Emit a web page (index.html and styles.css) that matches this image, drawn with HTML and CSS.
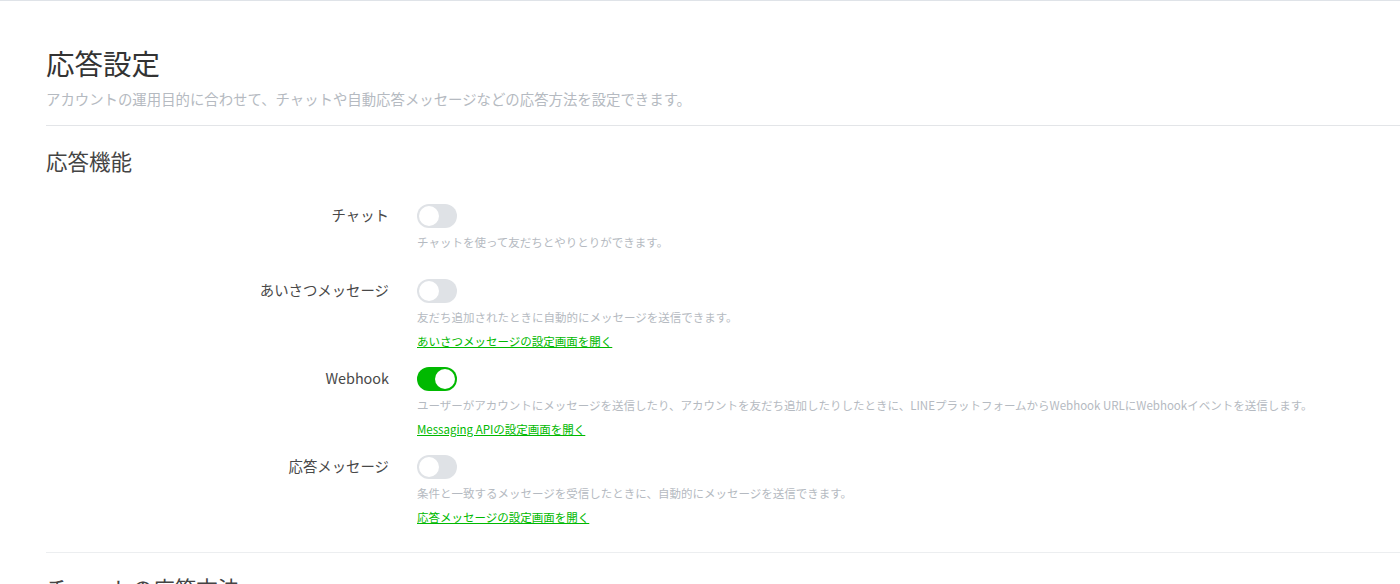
FILE: index.html
```html
<!DOCTYPE html>
<html lang="ja">
<head>
    <meta charset="UTF-8">
    <title>応答設定</title>
    <link rel="stylesheet" href="styles.css">
</head>
<body>
<div class="settings-page">
    <div class="page-header">
        <h1 class="page-title">応答設定</h1>
        <p class="page-lead">アカウントの運用目的に合わせて、チャットや自動応答メッセージなどの応答方法を設定できます。</p>
    </div>

    <div class="settings-section">
        <h2 class="section-title">応答機能</h2>

        <div class="setting-row">
            <div class="setting-label">チャット</div>
            <div class="setting-control">
                <span class="toggle"><span class="toggle-knob"></span></span>
                <p class="setting-desc">チャットを使って友だちとやりとりができます。</p>
            </div>
        </div>

        <div class="setting-row">
            <div class="setting-label">あいさつメッセージ</div>
            <div class="setting-control">
                <span class="toggle"><span class="toggle-knob"></span></span>
                <p class="setting-desc">友だち追加されたときに自動的にメッセージを送信できます。</p>
                <a href="#" class="setting-link">あいさつメッセージの設定画面を開く</a>
            </div>
        </div>

        <div class="setting-row">
            <div class="setting-label">Webhook</div>
            <div class="setting-control">
                <span class="toggle toggle-on"><span class="toggle-knob"></span></span>
                <p class="setting-desc">ユーザーがアカウントにメッセージを送信したり、アカウントを友だち追加したりしたときに、LINEプラットフォームからWebhook URLにWebhookイベントを送信します。</p>
                <a href="#" class="setting-link">Messaging APIの設定画面を開く</a>
            </div>
        </div>

        <div class="setting-row">
            <div class="setting-label">応答メッセージ</div>
            <div class="setting-control">
                <span class="toggle"><span class="toggle-knob"></span></span>
                <p class="setting-desc">条件と一致するメッセージを受信したときに、自動的にメッセージを送信できます。</p>
                <a href="#" class="setting-link">応答メッセージの設定画面を開く</a>
            </div>
        </div>
    </div>

    <div class="settings-section">
        <h2 class="section-title">チャットの応答方法</h2>
    </div>
</div>
</body>
</html>
```

FILE: styles.css
```css
body {
    margin: 0;
    background: white;
    font-family: "Noto Sans CJK JP", "Noto Sans", sans-serif;
    color: #333;
}

.settings-page {
    border-top: 1px solid #dfe3e8;
    padding: 43px 0 0 46px;
}

.page-header {
    padding-bottom: 16px;
    border-bottom: 1px solid #e3e5e8;
}

.page-title {
    margin: 0;
    font-size: 28.5px;
    line-height: 38px;
    font-weight: normal;
    color: #333;
}

.page-lead {
    margin: 7px 0 0;
    font-size: 14.4px;
    line-height: 20px;
    color: #b5bac1;
}

.settings-section {
    padding-bottom: 9px;
    border-bottom: 1px solid #eceef0;
}

.section-title {
    margin: 21px 0 29px;
    font-size: 21.5px;
    line-height: 28px;
    font-weight: normal;
    color: #444;
}

.setting-row {
    display: grid;
    grid-template-columns: 343px 1fr;
    column-gap: 28px;
    margin-bottom: 17px;
}

.setting-label {
    text-align: right;
    font-size: 14.4px;
    line-height: 22px;
    color: #484848;
}

.setting-control {
    display: flex;
    flex-direction: column;
    align-items: flex-start;
}

.toggle {
    display: flex;
    box-sizing: border-box;
    width: 40px;
    height: 24px;
    padding: 2px;
    border-radius: 12px;
    background: #dfe2e6;
}

.toggle-knob {
    width: 20px;
    height: 20px;
    border-radius: 50%;
    background: white;
}

.toggle-on {
    justify-content: flex-end;
    background: #00b900;
}

.setting-desc {
    margin: 5px 0 0;
    font-size: 11.5px;
    line-height: 18px;
    color: #b5bac1;
}

.setting-desc:last-child {
    margin-bottom: 11px;
}

.setting-link {
    margin-top: 6px;
    font-size: 11.5px;
    line-height: 18px;
    color: #00b900;
    text-decoration: underline;
}
```
